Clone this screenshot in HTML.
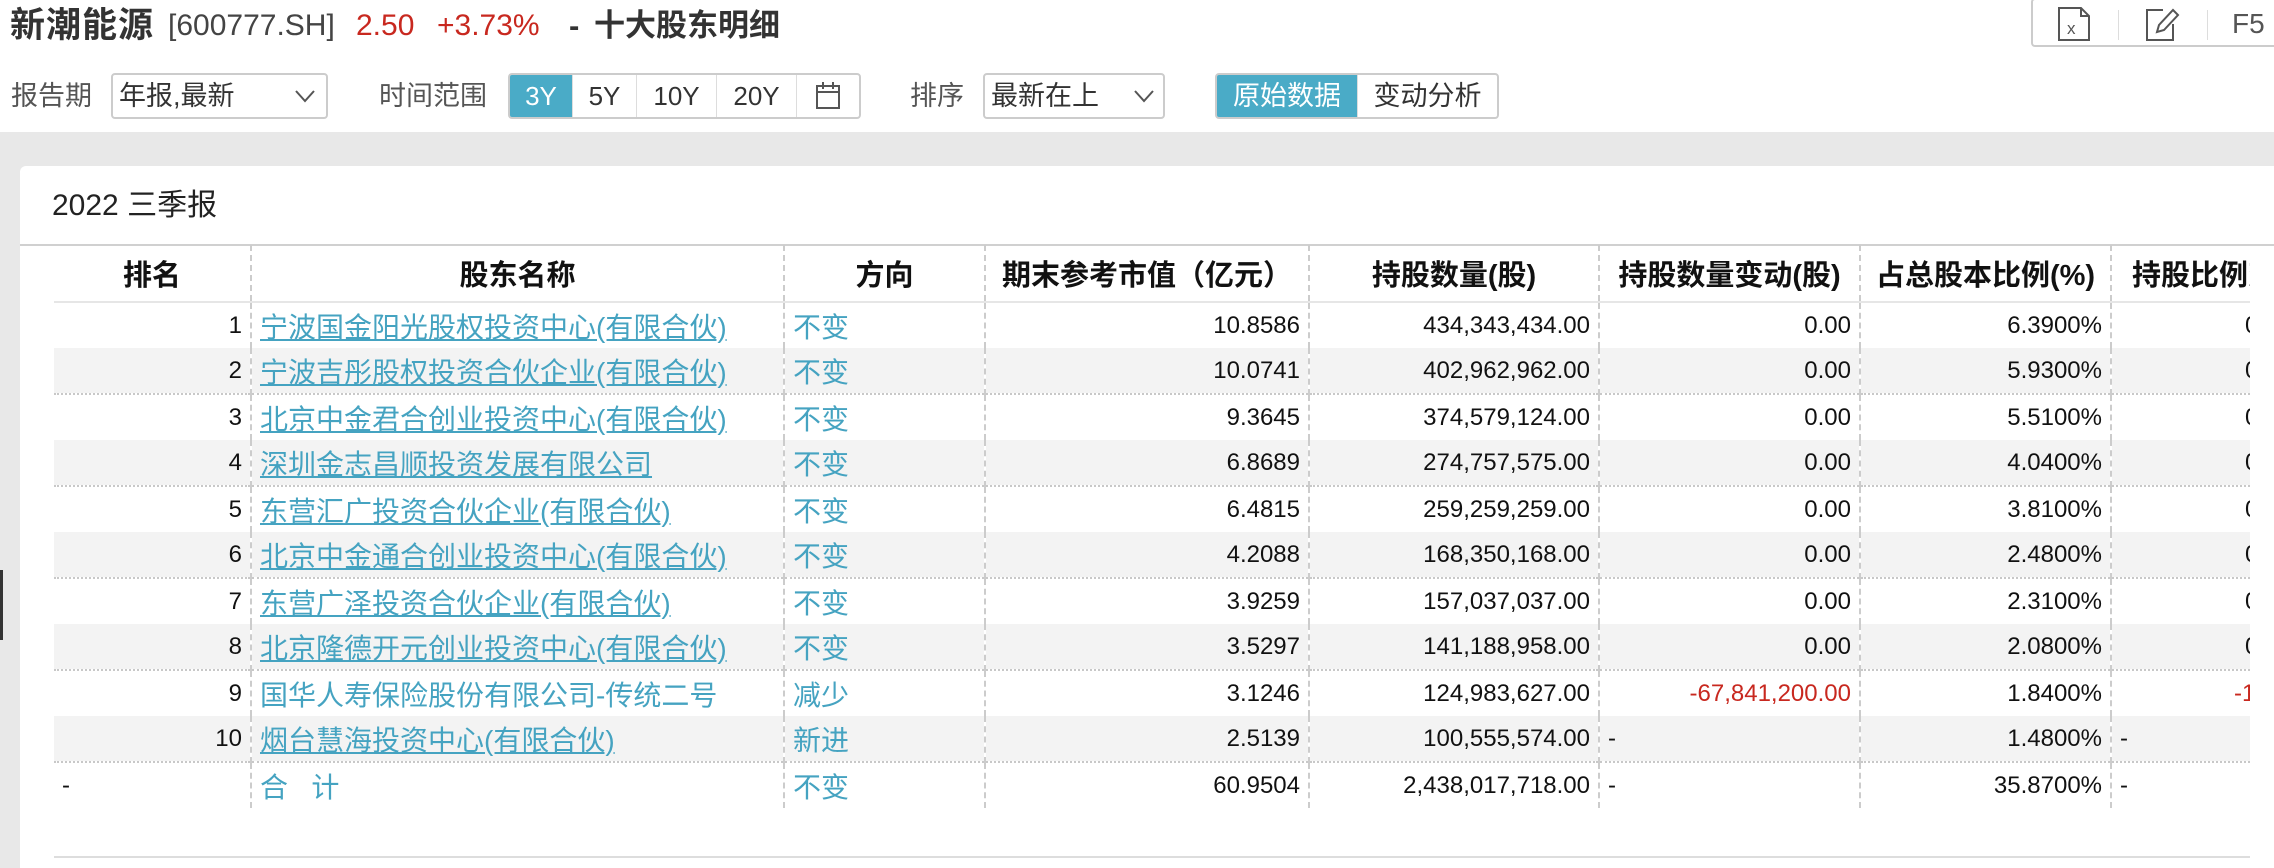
<!DOCTYPE html>
<html><head><meta charset="utf-8"><style>
*{margin:0;padding:0;box-sizing:border-box}
body{width:2274px;height:868px;overflow:hidden;background:#fff;font-family:"Liberation Sans","Noto Sans CJK SC",sans-serif;color:#222;position:relative}
.abs{position:absolute}
.t{position:absolute;top:6px;line-height:40px;white-space:nowrap;color:#333}
.lbl{font-size:27px;color:#555;top:73px;line-height:46px}
.sel{top:73px;height:46px;border:2px solid #ccc;border-radius:4px;font-size:27px;line-height:42px;padding-left:6px;color:#333}
.grp{top:73px;height:46px;border:2px solid #ccc;border-radius:4px;display:flex;overflow:hidden}
.grp div{height:42px;line-height:42px;text-align:center;font-size:26px;color:#333;border-right:1px solid #ddd}
.grp div:last-child{border-right:none}
.grp .on{background:#4aabc7;color:#fff}
table{border-collapse:collapse;table-layout:fixed;font-size:24px}
td,th{height:46px;white-space:nowrap;overflow:hidden;border-left:2px dashed #ccc;padding:0 8px}
td:first-child,th:first-child{border-left:none}
th{height:57px;font-weight:bold;text-align:center;color:#111;font-size:29px}
td{text-align:right;color:#111}
tr.e td{background:#f3f3f3}
tr.dl td{border-bottom:2px dotted #c8c8c8}
td.n{text-align:left;color:#45a3c1;font-size:28px}
td.n span{text-decoration:underline}
td.d{text-align:left;color:#45a3c1;font-size:28px}
td.l{text-align:left}
td.z{text-align:left;padding-left:133px}
.red{color:#c8281f!important}
</style></head><body>
<div class="t" style="left:10px;font-size:35px;font-weight:bold;letter-spacing:1px">新潮能源</div>
<div class="t" style="left:168px;font-size:30px;color:#444">[600777.SH]</div>
<div class="t" style="left:356px;font-size:30px;color:#c8281f">2.50</div>
<div class="t" style="left:437px;font-size:30px;color:#c8281f">+3.73%</div>
<div class="t" style="left:569px;font-size:31px;font-weight:bold">-</div>
<div class="t" style="left:594px;font-size:31px;font-weight:bold">十大股东明细</div>

<div class="abs" style="left:2031px;top:-2px;width:260px;height:49px;border:2px solid #ccc;border-radius:4px"></div>
<svg class="abs" style="left:2055px;top:6px" width="40" height="36" viewBox="0 0 40 36"><path d="M4 2h22l8 8v24H4z M26 2v8h8" fill="none" stroke="#555" stroke-width="2"/><text x="12" y="28" font-size="17" fill="#555" font-family="Liberation Sans">x</text></svg>
<div class="abs" style="left:2118px;top:10px;width:1px;height:30px;background:#ddd"></div>
<svg class="abs" style="left:2143px;top:6px" width="40" height="36" viewBox="0 0 40 36"><path d="M20 4H4v30h26V18" fill="none" stroke="#555" stroke-width="2"/><path d="M14 26l2-7 14-15 5 5-14 15z" fill="none" stroke="#555" stroke-width="2"/></svg>
<div class="abs" style="left:2207px;top:10px;width:1px;height:30px;background:#ddd"></div>
<div class="abs" style="left:2232px;top:6px;font-size:28px;line-height:36px;color:#555">F5</div>

<div class="abs lbl" style="left:11px">报告期</div>
<div class="abs sel" style="left:111px;width:217px">年报,最新<svg class="abs" style="right:10px;top:14px" width="22" height="14"><path d="M2 2l9 10 9-10" fill="none" stroke="#555" stroke-width="2"/></svg></div>
<div class="abs lbl" style="left:379px">时间范围</div>
<div class="abs grp" style="left:508px;width:353px"><div class="on" style="width:63px">3Y</div><div style="width:64px">5Y</div><div style="width:80px">10Y</div><div style="width:80px">20Y</div><div style="width:62px"><svg width="28" height="30" style="margin-top:6px"><rect x="3" y="5" width="22" height="22" fill="none" stroke="#555" stroke-width="2"/><path d="M3 11h22M9 1v7M19 1v7" stroke="#555" stroke-width="2"/></svg></div></div>
<div class="abs lbl" style="left:910px">排序</div>
<div class="abs sel" style="left:983px;width:182px">最新在上<svg class="abs" style="right:8px;top:14px" width="22" height="14"><path d="M2 2l9 10 9-10" fill="none" stroke="#555" stroke-width="2"/></svg></div>
<div class="abs grp" style="left:1215px;width:284px"><div class="on" style="width:141px;font-size:27px">原始数据</div><div style="width:139px;font-size:27px">变动分析</div></div>

<div class="abs" style="left:0;top:132px;width:2274px;height:736px;background:#e8e8e8"></div>
<div class="abs" style="left:0;top:570px;width:3px;height:70px;background:#333"></div>
<div class="abs" style="left:20px;top:166px;width:2254px;height:702px;background:#fff;border-radius:6px 0 0 0"></div>
<div class="abs" style="left:52px;top:185px;font-size:30px;line-height:42px;color:#222">2022 三季报</div>
<div class="abs" style="left:20px;top:244px;width:2254px;height:2px;background:#d0d0d0"></div>
<div class="abs" style="left:54px;top:856px;width:2196px;height:2px;background:#ddd"></div>

<div class="abs" style="left:54px;top:245px;width:2196px;overflow:hidden">
<table style="width:2400px">
<colgroup><col style="width:197px"><col style="width:533px"><col style="width:201px"><col style="width:324px"><col style="width:290px"><col style="width:261px"><col style="width:251px"><col style="width:343px"></colgroup>
<tr style="border-bottom:2px solid #e6e6e6"><th>排名</th><th>股东名称</th><th>方向</th><th>期末参考市值（亿元）</th><th>持股数量(股)</th><th>持股数量变动(股)</th><th>占总股本比例(%)</th><th style="text-align:left;padding-left:20px">持股比例变动(%)</th></tr>
<tr><td>1</td><td class="n"><span>宁波国金阳光股权投资中心(有限合伙)</span></td><td class="d">不变</td><td>10.8586</td><td>434,343,434.00</td><td>0.00</td><td>6.3900%</td><td class="z">0.0000</td></tr>
<tr class="e dl"><td>2</td><td class="n"><span>宁波吉彤股权投资合伙企业(有限合伙)</span></td><td class="d">不变</td><td>10.0741</td><td>402,962,962.00</td><td>0.00</td><td>5.9300%</td><td class="z">0.0000</td></tr>
<tr><td>3</td><td class="n"><span>北京中金君合创业投资中心(有限合伙)</span></td><td class="d">不变</td><td>9.3645</td><td>374,579,124.00</td><td>0.00</td><td>5.5100%</td><td class="z">0.0000</td></tr>
<tr class="e dl"><td>4</td><td class="n"><span>深圳金志昌顺投资发展有限公司</span></td><td class="d">不变</td><td>6.8689</td><td>274,757,575.00</td><td>0.00</td><td>4.0400%</td><td class="z">0.0000</td></tr>
<tr><td>5</td><td class="n"><span>东营汇广投资合伙企业(有限合伙)</span></td><td class="d">不变</td><td>6.4815</td><td>259,259,259.00</td><td>0.00</td><td>3.8100%</td><td class="z">0.0000</td></tr>
<tr class="e dl"><td>6</td><td class="n"><span>北京中金通合创业投资中心(有限合伙)</span></td><td class="d">不变</td><td>4.2088</td><td>168,350,168.00</td><td>0.00</td><td>2.4800%</td><td class="z">0.0000</td></tr>
<tr><td>7</td><td class="n"><span>东营广泽投资合伙企业(有限合伙)</span></td><td class="d">不变</td><td>3.9259</td><td>157,037,037.00</td><td>0.00</td><td>2.3100%</td><td class="z">0.0000</td></tr>
<tr class="e dl"><td>8</td><td class="n"><span>北京隆德开元创业投资中心(有限合伙)</span></td><td class="d">不变</td><td>3.5297</td><td>141,188,958.00</td><td>0.00</td><td>2.0800%</td><td class="z">0.0000</td></tr>
<tr><td>9</td><td class="d">国华人寿保险股份有限公司-传统二号</td><td class="d">减少</td><td>3.1246</td><td>124,983,627.00</td><td class="red">-67,841,200.00</td><td>1.8400%</td><td class="z red" style="padding-left:122px">-1.0000</td></tr>
<tr class="e dl"><td>10</td><td class="n"><span>烟台慧海投资中心(有限合伙)</span></td><td class="d">新进</td><td>2.5139</td><td>100,555,574.00</td><td class="l">-</td><td>1.4800%</td><td class="l">-</td></tr>
<tr><td class="l">-</td><td class="d"><span>合 &nbsp; 计</span></td><td class="d">不变</td><td>60.9504</td><td>2,438,017,718.00</td><td class="l">-</td><td>35.8700%</td><td class="l">-</td></tr>
</table></div>
</body></html>
